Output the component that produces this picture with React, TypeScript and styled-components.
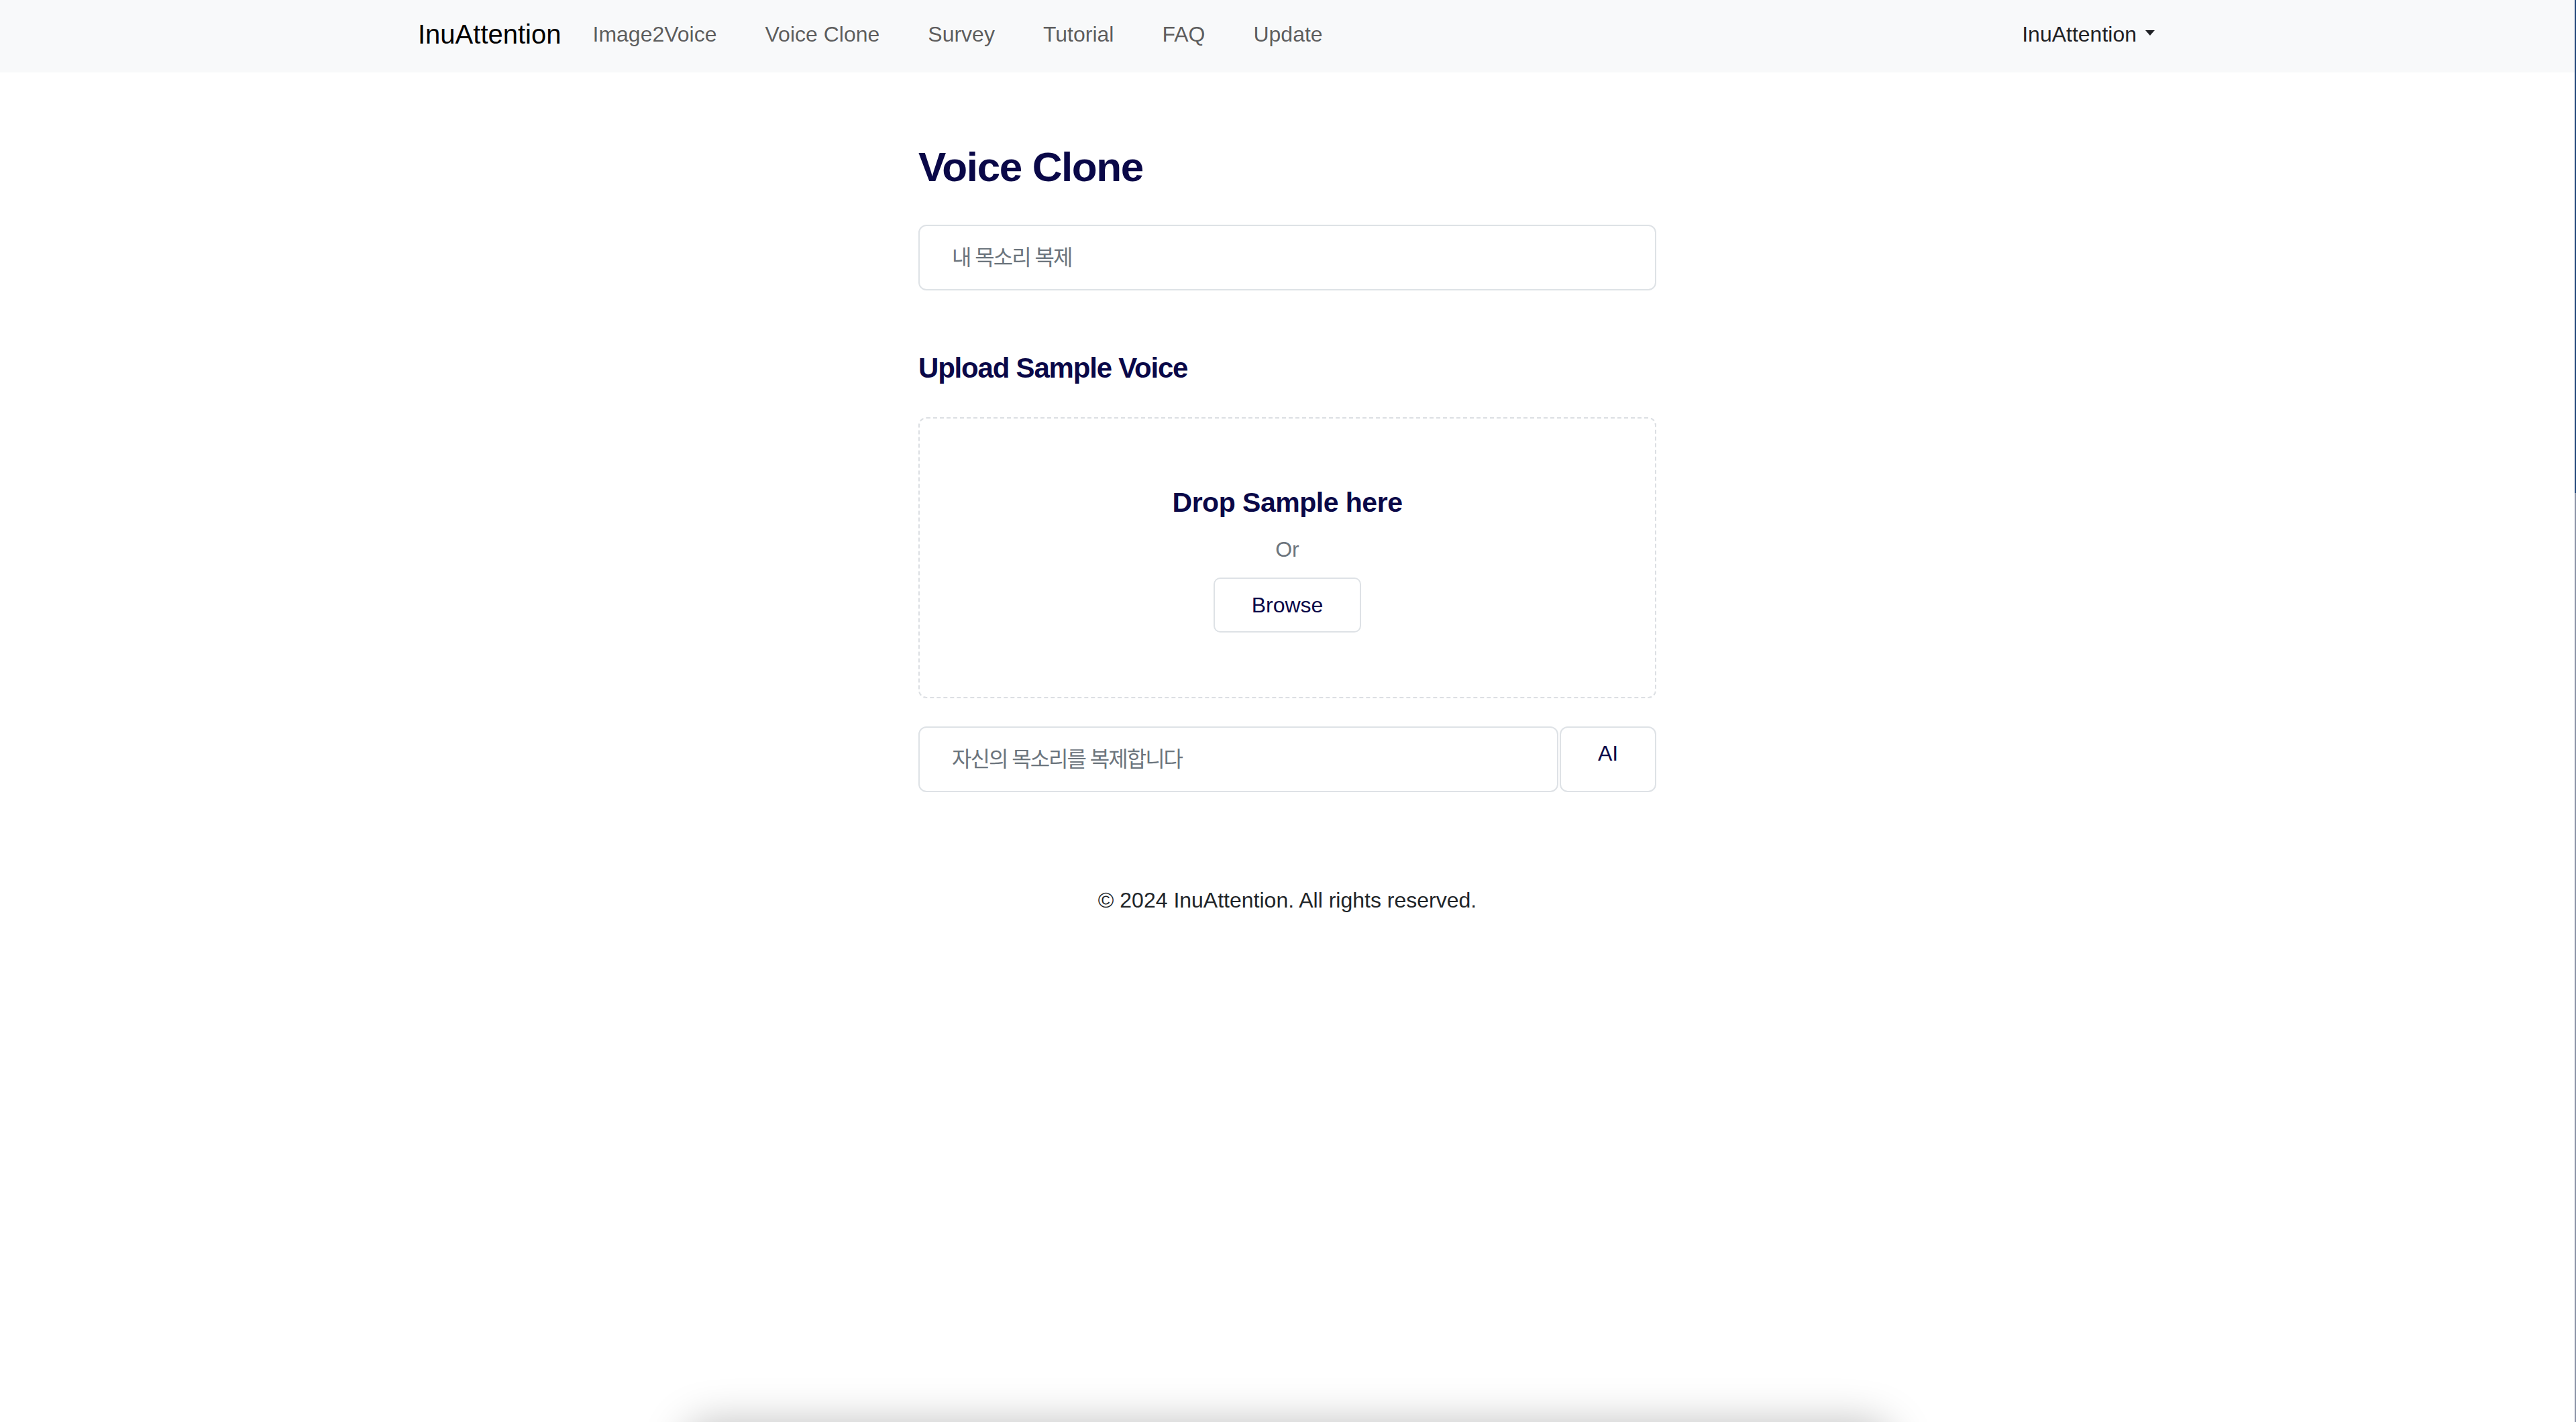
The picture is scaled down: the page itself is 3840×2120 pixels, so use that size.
import React from "react";
import styled, { createGlobalStyle } from "styled-components";

const NAVY = "#0a0848";

const navItems = ["Image2Voice", "Voice Clone", "Survey", "Tutorial", "FAQ", "Update"];

const App: React.FC = () => {
  return (
    <>
      <GlobalStyle />
      <Navbar>
        <NavContainer>
          <Brand href="#">InuAttention</Brand>
          <NavList>
            {navItems.map((item) => (
              <li key={item}>
                <NavLink href="#">{item}</NavLink>
              </li>
            ))}
          </NavList>
          <Dropdown href="#">
            InuAttention
            <Caret />
          </Dropdown>
        </NavContainer>
      </Navbar>
      <Main>
        <Title>Voice Clone</Title>
        <TextField type="text" placeholder="내 목소리 복제" />
        <SectionTitle>Upload Sample Voice</SectionTitle>
        <DropZone>
          <DropTitle>Drop Sample here</DropTitle>
          <OrText>Or</OrText>
          <BrowseButton type="button">Browse</BrowseButton>
        </DropZone>
        <PromptRow>
          <TextField type="text" placeholder="자신의 목소리를 복제합니다" />
          <AiButton type="button">AI</AiButton>
        </PromptRow>
        <Footer>© 2024 InuAttention. All rights reserved.</Footer>
      </Main>
      <BottomSheet />
      <EdgeLine />
    </>
  );
};

const GlobalStyle = createGlobalStyle`
  html, body {
    margin: 0;
    padding: 0;
    background: #ffffff;
  }
  body {
    padding-right: 2px;
    font-family: "Liberation Sans", "Noto Sans CJK KR", Arial, sans-serif;
    color: #212529;
  }
  * {
    box-sizing: border-box;
  }
`;

const Navbar = styled.nav`
  height: 108px;
  background: #f8f9fa;
  padding-bottom: 6px;
  display: flex;
  align-items: center;
`;

const NavContainer = styled.div`
  width: 100%;
  max-width: 2640px;
  margin: 0 auto;
  padding: 0 24px;
  display: flex;
  align-items: center;
`;

const Brand = styled.a`
  font-size: 40px;
  line-height: 60px;
  color: #000000;
  text-decoration: none;
`;

const NavList = styled.ul`
  display: flex;
  gap: 72px;
  list-style: none;
  margin: 0 0 0 47px;
  padding: 0;
`;

const NavLink = styled.a`
  font-size: 32px;
  line-height: 48px;
  color: rgba(0, 0, 0, 0.65);
  text-decoration: none;
`;

const Dropdown = styled.a`
  margin-left: auto;
  margin-right: 3px;
  display: flex;
  align-items: center;
  font-size: 32px;
  line-height: 48px;
  color: #1f2125;
  text-decoration: none;
`;

const Caret = styled.span`
  width: 0;
  height: 0;
  border-top: 8px solid #1f2125;
  border-left: 7px solid transparent;
  border-right: 7px solid transparent;
  margin-left: 13px;
  margin-bottom: 5px;
`;

const Main = styled.main`
  max-width: 1100px;
  margin: 0 auto;
  padding-top: 104px;
`;

const Title = styled.h1`
  margin: 0 0 49px;
  font-size: 62px;
  line-height: 74px;
  font-weight: 700;
  letter-spacing: -1.4px;
  color: ${NAVY};
`;

const TextField = styled.input`
  display: block;
  width: 100%;
  min-width: 0;
  flex: 1;
  height: 98px;
  border: 2px solid #dee2e6;
  border-radius: 12px;
  padding: 0 48px;
  background: #ffffff;
  font-family: "Liberation Sans", "Noto Sans CJK KR", sans-serif;
  font-size: 32px;
  letter-spacing: -2px;
  color: #212529;
  outline: none;

  &::placeholder {
    color: #6c757d;
    opacity: 1;
  }
`;

const SectionTitle = styled.h2`
  margin: 91px 0 48px;
  font-size: 42px;
  line-height: 50px;
  font-weight: 700;
  letter-spacing: -1.2px;
  color: ${NAVY};
`;

const DropZone = styled.div`
  border: 2px dashed #dcdfe3;
  border-radius: 12px;
  padding: 101px 0 96px;
  display: flex;
  flex-direction: column;
  align-items: center;
`;

const DropTitle = styled.h3`
  margin: 0 0 22px;
  font-size: 41px;
  line-height: 48px;
  font-weight: 700;
  letter-spacing: -0.5px;
  color: ${NAVY};
`;

const OrText = styled.p`
  margin: 0 0 18px;
  font-size: 32px;
  line-height: 48px;
  color: #6c757d;
`;

const OutlineButton = styled.button`
  border: 2px solid #dee2e6;
  border-radius: 10px;
  background: #ffffff;
  font-family: "Liberation Sans", Arial, sans-serif;
  font-size: 32px;
  line-height: 48px;
  color: ${NAVY};
  cursor: pointer;
`;

const BrowseButton = styled(OutlineButton)`
  padding: 15px 55px;
`;

const AiButton = styled(OutlineButton)`
  width: 144px;
  flex: none;
  padding: 14px 0 0;
  display: flex;
  align-items: flex-start;
  justify-content: center;
  border-radius: 12px;
`;

const PromptRow = styled.div`
  display: flex;
  align-items: stretch;
  gap: 2px;
  margin-top: 42px;
`;

const Footer = styled.footer`
  margin-top: 137px;
  text-align: center;
  font-size: 32px;
  line-height: 48px;
  color: #212529;
`;

const BottomSheet = styled.div`
  position: fixed;
  top: 100%;
  left: 50%;
  transform: translateX(-50%);
  width: 1800px;
  height: 240px;
  border-radius: 40px;
  background: #ffffff;
  box-shadow: 0 0 62px rgba(0, 0, 0, 0.25);
`;

const EdgeLine = styled.div`
  position: fixed;
  top: 0;
  right: 0;
  width: 2px;
  height: 100%;
  background: linear-gradient(to bottom, #22467a 0, #22467a 735px, #8a92a6 735px);
`;

export default App;
